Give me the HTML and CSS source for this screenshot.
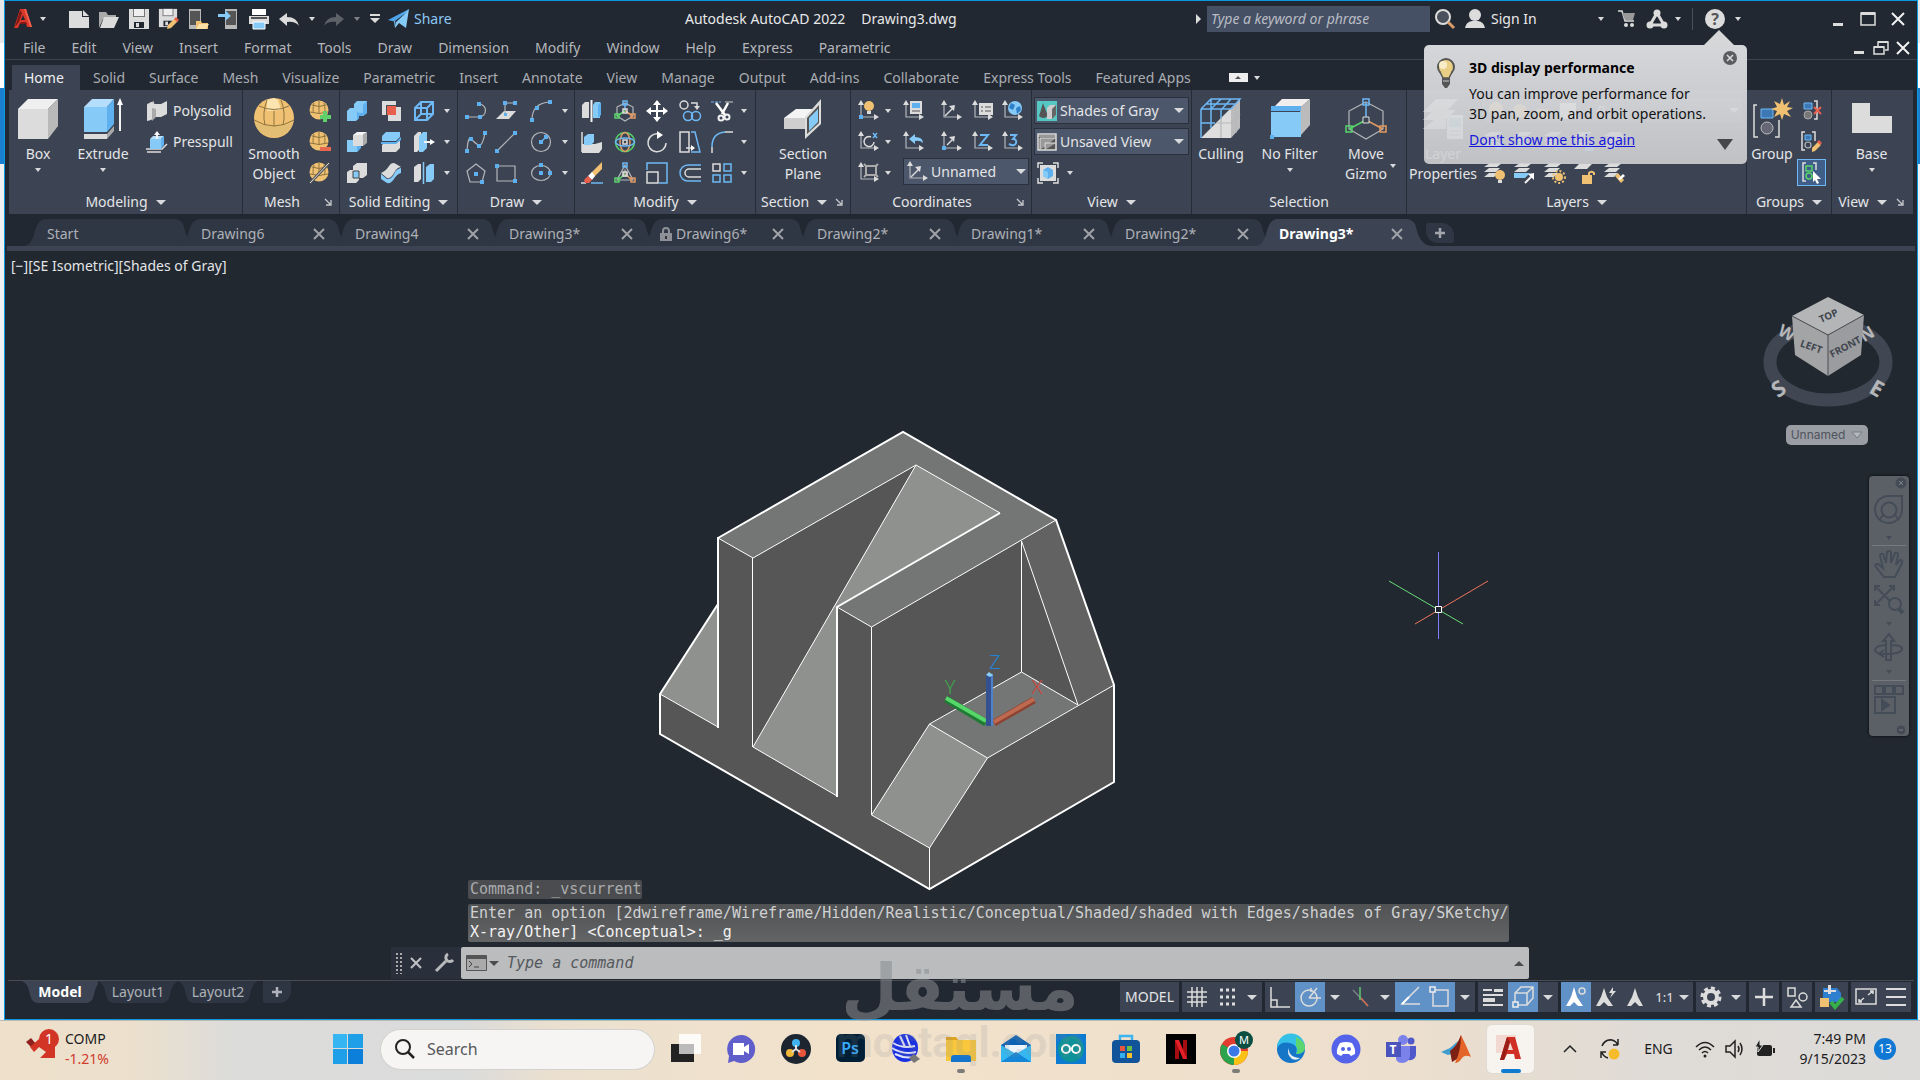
FILE: index.html
```html
<!DOCTYPE html>
<html lang="en">
<head>
<meta charset="utf-8">
<title>Autodesk AutoCAD 2022 - Drawing3.dwg</title>
<link rel="stylesheet" href="styles.css">
</head>
<body>
<svg class="defs" aria-hidden="true">
  <symbol id="axes" viewBox="0 0 22 22"><path class="lg" d="M4 4V17H18"/><path class="w" d="M4 0l3 5H1zM22 17l-5-3v6z"/></symbol>
  <symbol id="stack" viewBox="0 0 22 22"><path class="w" d="M7 1h12l-5 4H1zM6 6h11l-4 4H1zM6 11h9l-4 4H1z"/></symbol>
  <symbol id="ball" viewBox="0 0 22 22"><circle class="y" cx="10" cy="10" r="9.500"/><path class="ly" d="M1 12q9 3 18 0M5 3q-2 8 0 10M10 0v14M15 3q2 8 0 10M3 5q7 3 14 0"/></symbol>
  <symbol id="x" viewBox="0 0 12 12"><path d="M1 1l10 10M11 1L1 11" fill="none" stroke="currentColor" stroke-width="2"/></symbol>
  <symbol id="plus" viewBox="0 0 12 12"><path d="M6 1v10M1 6h10" fill="none" stroke="currentColor" stroke-width="2.500"/></symbol>
  <symbol id="launch" viewBox="0 0 8 8"><path d="M1 1l5 5M7 2v5H2" fill="none" stroke="#c8cacd" stroke-width="1.300"/></symbol>
  <symbol id="phone" viewBox="0 0 22 22"><path fill="#b8b8b8" d="M4 1h12v20H4z"/><path fill="#555" d="M5 3h10v14H5z"/></symbol>
  <symbol id="floppy" viewBox="0 0 22 22"><path class="w" d="M1 1h20v20H1z"/><path fill="#777" d="M5 1h12v8H5z"/><path fill="#eee" d="M6 1h10v7H6z"/><path fill="#222831" d="M6 14h10v6H6z"/><path class="w" d="M8 15h3v4H8z"/></symbol>
</svg>

<main class="app">
  <header class="titlebar">
    <div class="quick">
      <button class="logo" aria-label="Application menu"><svg width="20" height="22" viewBox="0 0 20 22"><path fill="#d8372a" d="M7 1h6l6 18h-5l-1-4H7l-2 5H1z"/><path fill="#222831" d="M10 7l2 5H8z"/><path fill="#7f1a16" d="M7 2l2 3-3 9-4 5zM8 14h5l1 2H7z"/><path fill="#f0624d" d="M11 1h2l6 18h-2z"/></svg><i class="arr"></i></button>
      <button aria-label="New"><svg width="22" height="22"><path class="w" d="M1 3h13v6h7v11H1z"/><path class="w" d="M15 2l6 6h-6z"/></svg></button>
      <button aria-label="Open"><svg width="22" height="22"><path fill="#aaa" d="M1 4h7l2 3h8v4H5L1 20z"/><path class="w" d="M6 9h15l-5 11H2z"/></svg></button>
      <button aria-label="Save"><svg width="22" height="22"><use href="#floppy"/></svg></button>
      <button aria-label="Save as"><svg width="22" height="22"><use href="#floppy" width="20" height="20"/><path fill="#222831" d="M8 21l12-12 3 3v10z"/><path class="y" d="M10 17l7-7 3 3-7 7-4 1z"/><path class="r" d="M18 9l3 3-2 2-3-3z"/></svg></button>
      <button aria-label="Open from mobile"><svg width="22" height="22"><use href="#phone" x="-3"/><path class="y" d="M8 13h5l1 2h6v6H8z"/><path fill="#fbe0a8" d="M11 16h10l-3 5H8z"/></svg></button>
      <button aria-label="Save to mobile"><svg width="22" height="22"><use href="#phone" x="3"/><path class="b" d="M0 6h7V2l6 6-6 5V9H0z"/></svg></button>
      <button aria-label="Plot"><svg width="22" height="22"><path fill="#fff" d="M4 1h14v6H4z"/><path class="w" d="M1 8h20v8H1z"/><path fill="#555" d="M3 9h16v2H3z"/><path class="b" stroke="#fff" d="M5 14h12v7H5z"/></svg></button>
      <button aria-label="Undo"><svg width="22" height="22"><path class="w" d="M1 11l8-6v4q10 0 12 9-4-5-12-4v4z"/></svg></button>
      <button class="slim" aria-label="Undo list"><i class="arr"></i></button>
      <button aria-label="Redo"><svg width="22" height="22"><path fill="#5c6067" d="M21 11l-8-6v4Q3 9 1 18q4-5 12-4v4z"/></svg></button>
      <button class="slim" aria-label="Redo list"><i class="arr dim"></i></button>
      <button class="slim wide" aria-label="Customize"><svg width="12" height="12"><path class="w" d="M1 1h10v2H1zM1 5h10l-5 5z"/></svg></button>
      <button class="share"><svg width="22" height="22"><path class="b" d="M21 1l-3 19-7-5-4 5-1-7z"/><path fill="#4fa3e8" d="M21 1L8 14l-8-2z"/><path fill="#222831" d="M19 4L8 14v4l-1-5z"/></svg>Share</button>
    </div>
    <h1><span>Autodesk AutoCAD 2022</span><span>Drawing3.dwg</span></h1>
    <div class="account">
      <i class="play"></i>
      <input class="keyword" type="text" aria-label="Keyword" placeholder="Type a keyword or phrase">
      <button aria-label="Search"><svg width="22" height="22"><circle cx="9" cy="9" r="7" fill="#4a515d" stroke="#ddd" stroke-width="2"/><path d="M14 14l6 6" stroke="#d99a6a" stroke-width="3"/></svg></button>
      <button class="signin"><svg width="22" height="22"><circle class="w" cx="11" cy="7" r="6"/><path class="w" d="M1 20q1-6 7-7h6q6 1 7 7z"/></svg><span>Sign In</span><i class="arr"></i></button>
      <button class="cart" aria-label="App store"><svg width="20" height="20"><path d="M1 2h4l3 10h9" class="ls"/><path fill="#999" d="M5 4h13l-2 7H8z"/><circle class="w" cx="9" cy="16" r="2"/><circle class="w" cx="15" cy="16" r="2"/></svg></button>
      <button class="apps" aria-label="Autodesk apps"><svg width="22" height="20"><path fill="none" stroke="#d8d8d8" stroke-width="3" d="M11 4L4 16h14z"/><circle class="w" cx="11" cy="4" r="3.500"/><circle class="w" cx="4" cy="16" r="3.500"/><circle class="w" cx="18" cy="16" r="3.500"/></svg></button>
      <button class="slim" aria-label="More apps"><i class="arr"></i></button>
      <i class="rule"></i>
      <button class="help" aria-label="Help"><svg width="22" height="22"><circle class="w" cx="11" cy="11" r="10"/><text x="11" y="17" text-anchor="middle" font-size="16" font-weight="700" fill="#555">?</text></svg></button>
      <button class="slim" aria-label="Help menu"><i class="arr"></i></button>
      <div class="winctl">
        <button aria-label="Minimize"><svg width="14" height="16"><path class="w" d="M2 12h10v3H2z"/></svg></button>
        <button aria-label="Maximize"><svg width="16" height="16"><path fill="none" stroke="#ddd" stroke-width="1.500" d="M1 2h14v12H1z"/><path class="w" d="M1 1h14v3H1z"/></svg></button>
        <button aria-label="Close"><svg width="14" height="14"><path class="lw" d="M1 1l12 12M13 1L1 13"/></svg></button>
      </div>
    </div>
  </header>

  <nav class="menubar">
    <button>File</button><button>Edit</button><button>View</button><button>Insert</button><button>Format</button><button>Tools</button><button>Draw</button><button>Dimension</button><button>Modify</button><button>Window</button><button>Help</button><button>Express</button><button>Parametric</button>
    <div class="docctl">
      <button aria-label="Minimize drawing"><svg width="14" height="14"><path class="w" d="M2 10h10v3H2z"/></svg></button>
      <button aria-label="Restore drawing"><svg width="16" height="14"><path fill="none" stroke="#ddd" stroke-width="1.500" d="M1 6h10v7H1zM5 5V1h10v8h-3"/><path class="w" d="M1 5h10v2H1zM5 0h10v2H5z"/></svg></button>
      <button aria-label="Close drawing"><svg width="14" height="14"><path class="lw" d="M1 1l12 12M13 1L1 13"/></svg></button>
    </div>
  </nav>

  <nav class="rtabs">
    <button class="on">Home</button><button>Solid</button><button>Surface</button><button>Mesh</button><button>Visualize</button><button>Parametric</button><button>Insert</button><button>Annotate</button><button>View</button><button>Manage</button><button>Output</button><button>Add-ins</button><button>Collaborate</button><button>Express Tools</button><button>Featured Apps</button>
    <button class="fold" aria-label="Minimize ribbon"><svg width="19" height="9"><path fill="#eee" d="M0 0h19v9H0z"/><path fill="#555" d="M9 3l3 3H6z"/></svg><i class="arr"></i></button>
  </nav>

  <section class="ribbon">
    <div class="panel p-modeling">
      <div class="body">
        <button class="big w58"><svg width="42" height="42"><path fill="#efefef" d="M1 11L11 1h30L31 11z"/><path class="w" d="M1 11h30v30H1z"/><path fill="#b9b9b9" d="M31 11L41 1v27L31 41z"/></svg>Box<i class="arr"></i></button>
        <button class="big w72"><svg width="42" height="42"><path fill="#b4defb" d="M2 9l8-8h22l-7 8z"/><path class="b" d="M2 9h23v25H2z"/><path class="d" d="M25 9l7-8v25l-7 8z"/><path class="w" d="M2 36h23v5H2z"/><path fill="#aaa" d="M25 36l7-8v5l-7 8z"/><path class="lw" d="M38 33V5"/><path fill="#fff" d="M38 0l3 7h-6z"/></svg>Extrude<i class="arr"></i></button>
        <div class="stack">
          <button class="row"><svg width="22" height="22"><path fill="#bbb" d="M1 4l7-3v14l-7 6z"/><path class="w" d="M1 5l4-3 4 2h6l6-3v13l-6 3H9l-4 3-4 1z"/><path fill="#aaa" d="M6 8l4 1v8l-4 4z"/></svg>Polysolid</button>
          <button class="row"><svg width="22" height="22"><path class="ls" d="M0 18h16l5-5M1 21h14"/><path class="b" d="M4 8h11v10H4z"/><path fill="#b4defb" d="M4 8l3-3h11l-3 3z"/><path class="d" d="M15 8l3-3v9l-3 4z"/><path class="lw" d="M11 8V2"/><path fill="#fff" d="M11 0l3 4H8z"/></svg>Presspull</button>
        </div>
      </div>
      <h2>Modeling<i class="arr lg5"></i></h2>
    </div>

    <div class="panel p-mesh">
      <div class="body">
        <button class="big w62"><svg width="42" height="42"><circle class="y" cx="21" cy="20" r="20"/><path fill="#d9ba76" d="M2 25q9 4 19 3 10 1 19-3A20 20 0 0 1 2 25z" opacity=".6"/><path fill="#fbe4b0" d="M14 2l7-2 4 2 3 10-14 1z"/><path class="ly" d="M1 22q10 6 20 6t20-6M14 2q-5 13-2 25M28 2q5 13 2 25M6 8q15 7 30 0M21 13v15"/></svg>Smooth<br>Object</button>
        <div class="grid c1">
          <button aria-label="Smooth more"><svg width="22" height="22"><use href="#ball"/><path fill="#5fd06a" d="M14 11h4v4h4v4h-4v3h-4v-3h-3v-4h3z"/></svg></button>
          <button aria-label="Smooth less"><svg width="22" height="22"><use href="#ball"/><path fill="#e8684f" d="M11 16h11v4H11z"/></svg></button>
          <button aria-label="Refine mesh"><svg width="22" height="22"><use href="#ball"/><path d="M1 21L20 1" stroke="#555" stroke-width="3"/><path d="M1 21L20 1" stroke="#ddd"/></svg></button>
        </div>
      </div>
      <div class="foot"><h2>Mesh</h2><button aria-label="Mesh settings"><svg width="8" height="8"><use href="#launch"/></svg></button></div>
    </div>

    <div class="panel p-solid">
      <div class="body grid">
        <button aria-label="Union"><svg width="22" height="22"><path class="b" d="M1 11l3-3h4V4l3-3h10v12l-4 3h-4v2l-3 3H1z"/><path class="d" d="M13 16h4l4-3V1l-4 4v8h-4zM11 11v9l2-2v-5z"/></svg></button>
        <button aria-label="Extract"><svg width="22" height="22"><path class="w" d="M2 1h14v6h5v14H8v-6H2z"/><path fill="#4b4f58" d="M6 5h10v10H6z"/><path class="r" d="M7 6h9v9H7z"/></svg></button>
        <button aria-label="Extract edges"><svg width="22" height="22"><path class="lb2" d="M2 8l6-6h12v12l-6 6H2zM2 8h12v12M14 8l6-6M8 3v11h11M8 14l-6 6"/></svg></button>
        <button class="a" aria-label="More edge tools"><i class="arr"></i></button>
        <button aria-label="Subtract"><svg width="22" height="22"><path class="b" d="M1 9h12v10l-2 2H1z"/><path class="d" d="M11 11h4v6l-4 4z"/><path class="w" d="M7 4h10v11H7z"/><path fill="#f4f4f4" d="M7 4l4-3h10l-4 3z"/><path fill="#aaa" d="M17 4l4-3v11l-4 3z"/></svg></button>
        <button aria-label="Slice"><svg width="22" height="22"><path class="b" d="M2 5l4-4h14v5l-4 4H2z"/><path class="w" d="M2 14l3-3h12l3-2v8l-4 4H2z"/><path class="d" d="M1 11h15l5-5v3l-5 4H1z"/></svg></button>
        <button aria-label="Extrude faces"><svg width="22" height="22"><path class="w" d="M1 5l4-4h3v16l-4 4H1z"/><path class="b" d="M6 5l4-4h4v16l-4 4H6z"/><path class="lw" d="M11 11h7"/><path fill="#fff" d="M22 11l-5-3v6z"/></svg></button>
        <button class="a" aria-label="More face tools"><i class="arr"></i></button>
        <button aria-label="Intersect"><svg width="22" height="22"><path class="w" d="M1 10l3-2h3V4l4-3h10v12l-4 3h-4v2l-3 3H1z"/><path class="b" stroke="#444" d="M7 9h6v7H7z"/></svg></button>
        <button aria-label="Thicken"><svg width="22" height="22"><path class="w" d="M1 11Q6 9 9 4t7-2l5 3q-4 0-7 6t-7 5z"/><path class="b" d="M1 12l6 5q5 0 7-5t7-6v5q-4 1-7 6t-7 4l-6-4z"/></svg></button>
        <button aria-label="Separate"><svg width="22" height="22"><path class="w" d="M1 5l4-3h3v15l-3 3H1z"/><path class="b" d="M13 5l4-3h4v15l-3 3h-5z"/><path stroke="#86caf8" stroke-width="1.500" d="M10.500 0v22"/></svg></button>
        <button class="a" aria-label="More body tools"><i class="arr"></i></button>
      </div>
      <h2>Solid Editing<i class="arr lg5"></i></h2>
    </div>

    <div class="panel p-draw">
      <div class="body grid">
        <button aria-label="Polyline"><svg width="22" height="22"><path class="lg" d="M2 17h12a6 6 0 0 0 0-13"/><path class="d" d="M0 15h4v4H0zM12 2h4v4h-4zM13 15h4v4h-4z"/></svg></button>
        <button aria-label="Planar surface"><svg width="22" height="22"><path class="w" d="M1 19l8-8h12l-7 8z"/><path class="lg" d="M10 15V3h10"/><path class="d" d="M8 1h4v4H8zM18 1h4v4h-4zM9 13h3v3H9z"/></svg></button>
        <button aria-label="Arc"><svg width="22" height="22"><path class="lg" d="M2 20Q2 3 20 2"/><path class="d" d="M0 18h4v4H0zM18 0h4v4h-4zM5 6h4v4H5z"/></svg></button>
        <button class="a" aria-label="Arc options"><i class="arr"></i></button>
        <button aria-label="Spline"><svg width="22" height="22"><path class="lg" d="M2 20Q3 5 6 8t7 6 7-12"/><path class="d" d="M0 18h4v4H0zM4 6h4v4H4zM12 13h4v4h-4zM18 0h4v4h-4z"/></svg></button>
        <button aria-label="Line"><svg width="22" height="22"><path class="lg" d="M2 20L20 2"/><path class="d" d="M0 18h4v4H0zM18 0h4v4h-4z"/></svg></button>
        <button aria-label="Circle"><svg width="22" height="22"><circle class="lg" cx="11" cy="11" r="9.500"/><path class="lb" d="M11 11l5-5"/><path class="d" d="M9 9h4v4H9zM14 4h4v4h-4z"/></svg></button>
        <button class="a" aria-label="Circle options"><i class="arr"></i></button>
        <button aria-label="Polygon"><svg width="22" height="22"><path class="lg" d="M11 2l9 7-3 11H5L2 9z"/><path class="d" d="M9 10h4v4H9zM15 18h4v4h-4z"/></svg></button>
        <button aria-label="Rectangle"><svg width="22" height="22"><path class="lg" d="M2 4h18v15H2z"/><path class="d" d="M0 2h4v4H0zM18 17h4v4h-4z"/></svg></button>
        <button aria-label="Ellipse"><svg width="22" height="22"><ellipse class="lg" cx="11" cy="11" rx="9.500" ry="7.500"/><path class="d" d="M9 9h4v4H9zM18 9h4v4h-4zM9 1h4v4H9z"/></svg></button>
        <button class="a" aria-label="Ellipse options"><i class="arr"></i></button>
      </div>
      <h2>Draw<i class="arr lg5"></i></h2>
    </div>

    <div class="panel p-modify">
      <div class="body grid">
        <button aria-label="3D mirror"><svg width="22" height="22"><path class="w" d="M1 5l3-3h4v16H1z"/><path class="b" d="M12 5l2-3h5v16h-7z"/><path class="d" d="M17 5l3-3v13l-3 3z"/><path class="lw" d="M10.500 0v22"/></svg></button>
        <button aria-label="3D move"><svg width="22" height="22"><path class="lg" d="M11 3l8 4v9l-8 5-8-5V7z"/><path class="lb" d="M11 3v8M9 1h4v4H9z"/><path class="lr" d="M11 11l8 5M17 14h4v4h-4z"/><path class="le" d="M11 11l-8 5M1 14h4v4H1z"/><path class="ls" d="M9 9h4v4H9z"/></svg></button>
        <button aria-label="Move"><svg width="22" height="22"><path fill="#fff" d="M11 0l4 5h-3v5h5V7l5 4-5 4v-3h-5v5h3l-4 5-4-5h3v-5H5v3l-5-4 5-4v3h5V5H7z"/></svg></button>
        <button aria-label="Copy"><svg width="22" height="22"><circle class="ls" cx="5" cy="5" r="4"/><path class="ls" d="M12 3h6v4"/><path class="w" d="M18 10l3-4h-6z"/><circle class="lb" cx="9" cy="16" r="4.500"/><circle class="lb" cx="17" cy="16" r="4.500"/></svg></button>
        <button aria-label="Trim"><svg width="22" height="22"><path stroke="#6db8f5" stroke-dasharray="3 1" d="M0 2h10"/><path class="lg" d="M14 2h8"/><path fill="none" stroke="#fff" stroke-width="2.500" d="M5 3l9 12M17 3l-6 11"/><circle class="lw" cx="10" cy="18" r="2.500"/><circle class="lw" cx="16" cy="17" r="2.500"/></svg></button>
        <button class="a" aria-label="Trim options"><i class="arr"></i></button>
        <button aria-label="3D align"><svg width="22" height="22"><path class="ls" d="M1 1v20"/><path class="w" d="M1 13h13l7-2v7l-3 4H1z"/><path class="b" d="M3 6l4-3h6v8l-3 3H3z"/></svg></button>
        <button aria-label="3D rotate"><svg width="22" height="22"><circle class="le" cx="11" cy="11" r="9.500"/><ellipse class="lr" cx="11" cy="11" rx="5" ry="9.500"/><ellipse class="lb" cx="11" cy="11" rx="9.500" ry="4"/><path class="ls" d="M9 9h4v4H9z"/></svg></button>
        <button aria-label="Rotate"><svg width="22" height="22"><path class="ls" d="M13 3A9 9 0 1 0 20 12"/><path fill="#fff" d="M17 4l-6-4v8z"/></svg></button>
        <button aria-label="Stretch"><svg width="22" height="22"><path class="ls" d="M1 1h9v20H1zM7 17h6"/><path class="lb" d="M12 1h4l5 20h-9"/><path fill="#fff" d="M16 17l-4-3v6z"/></svg></button>
        <button aria-label="Fillet"><svg width="22" height="22"><path class="lb" d="M1 16Q1 2 14 1"/><path class="ls" d="M1 16v6M14 1h8"/></svg></button>
        <button class="a" aria-label="Fillet options"><i class="arr"></i></button>
        <button aria-label="Erase"><svg width="22" height="22"><path class="ls" d="M0 21h5"/><path class="lb" d="M10 21h12"/><path class="y" d="M10 11L21 0v7l-8 8z"/><path fill="#fff" d="M7 14l4-4 3 4-3 4z"/><path class="r" d="M3 18l4-4 4 4-3 3H4z"/></svg></button>
        <button aria-label="3D scale"><svg width="22" height="22"><path class="lg" d="M11 3l8 15H3z"/><path fill="#8a8d92" d="M11 6l4 9H7z"/><path class="lb" d="M9 1h4v4H9z"/><path class="lr" d="M11 12l7 6M17 16h4v4h-4z"/><path class="le" d="M11 12l-7 6M1 16h4v4H1z"/><path class="ls" d="M9 10h4v4H9z"/></svg></button>
        <button aria-label="Scale"><svg width="22" height="22"><path class="lb" d="M1 8V1h20v20h-8"/><path class="ls" d="M1 10h11v11H1z"/></svg></button>
        <button aria-label="Offset"><svg width="22" height="22"><path class="lb" d="M22 3H9a8 8 0 0 0 0 16h13"/><path class="ls" d="M22 7H10a4 4 0 0 0 0 8h12"/></svg></button>
        <button aria-label="Array"><svg width="22" height="22"><path class="ls" d="M2 2h7v7H2z"/><path class="lb" d="M13 2h7v7h-7zM2 13h7v7H2zM13 13h7v7h-7z"/></svg></button>
        <button class="a" aria-label="Array options"><i class="arr"></i></button>
      </div>
      <h2>Modify<i class="arr lg5"></i></h2>
    </div>

    <div class="panel p-section">
      <div class="body">
        <button class="big fill"><svg width="42" height="42"><path fill="#f4f4f4" d="M2 20L14 11h22l-9 9z"/><path fill="#cfcfcf" d="M2 20h22v11H2z"/><path class="w" d="M23 19L39 1v25L23 41z"/><path fill="#555" d="M25 20L37 7v18L25 36z"/><path class="b" d="M27 20l9-9v13l-9 9z"/></svg>Section<br>Plane</button>
      </div>
      <div class="foot"><h2>Section<i class="arr lg5"></i></h2><button aria-label="Section settings"><svg width="8" height="8"><use href="#launch"/></svg></button></div>
    </div>

    <div class="panel p-coord">
      <div class="body grid">
        <button aria-label="UCS icon"><svg width="22" height="22"><use href="#axes"/><circle class="y" cx="12" cy="6" r="5"/><path class="w" d="M10 11h4v3h-4z"/><path class="d" d="M2 15h4v4H2z"/></svg></button>
        <button class="a" aria-label="UCS icon options"><i class="arr"></i></button>
        <button aria-label="UCS"><svg width="22" height="22"><use href="#axes"/><path class="w" d="M8 1h12v13H8z"/><path class="d" d="M10 3h8v5h-8z"/><path stroke="#555" d="M10 11h8"/></svg></button>
        <button aria-label="World"><svg width="22" height="22"><use href="#axes"/><path class="ls" d="M5 16l8-8"/><path class="w" d="M15 5l-1 6-5-5z"/></svg></button>
        <button aria-label="Named UCS"><svg width="22" height="22"><use href="#axes"/><path class="w" d="M8 3h14v12H8z"/><path stroke="#555" d="M10 7h2M14 7h6M10 11h2M14 11h6"/></svg></button>
        <button aria-label="UCS world"><svg width="22" height="22"><use href="#axes"/><circle class="b" cx="14" cy="8" r="7"/><path fill="#2f80c8" d="M10 3l4 2-2 5-4-2zM15 8l4-2 1 4-4 4z"/></svg></button>
        <button aria-label="X"><svg width="22" height="22"><use href="#axes"/><path class="ls" d="M14 6a5 5 0 1 0 3 5"/><path class="lb" d="M16 2l4 5M20 2l-4 5"/></svg></button>
        <button class="a" aria-label="Rotate axis"><i class="arr"></i></button>
        <button aria-label="UCS previous"><svg width="22" height="22"><use href="#axes"/><path class="b" d="M7 8l6-5v3q8 0 8 6-3-3-8-2v3z"/></svg></button>
        <button aria-label="Origin"><svg width="22" height="22"><use href="#axes"/><path class="ls" d="M7 14l5-5"/><path class="w" d="M15 5l-1 6-5-5z"/><path class="d" d="M2 15h4v4H2z"/></svg></button>
        <button aria-label="Z axis vector"><svg width="22" height="22"><use href="#axes"/><path class="lb2" d="M9 4h8l-8 10h8"/></svg></button>
        <button aria-label="3 point"><svg width="22" height="22"><use href="#axes"/><path class="lb2" d="M9 4h6l-3 4q4 0 3 4t-7 1"/></svg></button>
        <button aria-label="Face"><svg width="22" height="22"><use href="#axes"/><path fill="none" stroke="#aaa" stroke-width="2" d="M9 4h10v9H9zM7 2l3 3M21 2l-3 3M7 15l3-3M21 15l-3-3"/></svg></button>
        <button class="a" aria-label="Face options"><i class="arr"></i></button>
        <label class="combo ucs"><svg width="22" height="22"><use href="#axes"/><path class="ls" d="M5 16l8-8"/><path class="w" d="M15 5l-1 6-5-5z"/></svg><select aria-label="UCS name"><option>Unnamed</option></select><i class="arr lg5"></i></label>
      </div>
      <div class="foot"><h2>Coordinates</h2><button aria-label="Coordinate settings"><svg width="8" height="8"><use href="#launch"/></svg></button></div>
    </div>

    <div class="panel p-view">
      <div class="body stack">
        <label class="combo"><svg width="20" height="20"><path fill="#56c8c4" d="M0 0h20v20H0z"/><path fill="#555" d="M6 2l5 13q-5 4-9 0z"/><path fill="#ccc" d="M10 7l3-3h6v10l-4 4h-5z"/><path fill="#666" d="M15 8l4-4v10l-4 4z"/></svg><select aria-label="Visual style"><option>Shades of Gray</option></select><i class="arr lg5"></i></label>
        <label class="combo"><svg width="20" height="20"><path fill="#555" stroke="#ddd" stroke-width="1.500" d="M1 2h18v16H1z"/><path stroke="#ddd" fill="#999" d="M1 4h18M3 18V6h16M8 18v-7h11"/></svg><select aria-label="View"><option>Unsaved View</option></select><i class="arr lg5"></i></label>
        <div class="vp"><button aria-label="Viewport configuration"><svg width="22" height="22"><path class="w" d="M3 3h16v16H3z"/><path class="ls" d="M1 6V1h5M16 1h5v5M21 16v5h-5M6 21H1v-5"/><path class="d" d="M11 5l5 3v6l-5 3-5-3V8z"/><path class="b" d="M6 8l5 2v7l-5-3z"/></svg></button><i class="arr"></i></div>
      </div>
      <h2>View<i class="arr lg5"></i></h2>
    </div>

    <div class="panel p-select">
      <div class="body">
        <button class="big w60"><svg width="42" height="42"><path fill="#ddd" d="M1 40L15 26 31 10v30z"/><path fill="#bbb" d="M31 10l9-9v29l-9 10z"/><path class="lb" d="M1 11h30M1 11v29M1 11L11 1h29L31 11M11 11v19M21 11v10M1 25h14M6 6h30M21 1L12 10M31 1l-9 10M11 1v10"/><path class="lg" d="M21 20v20M16 25h15l9-9M36 6v29" stroke="#666"/></svg>Culling</button>
        <button class="big w80"><svg width="42" height="42"><path fill="#f2eeee" d="M4 10l9-9h28L31 10z"/><path fill="#bbb" d="M31 10L41 1v26l-9 10z"/><path class="d" d="M2 8h30v5H2z"/><path class="b" d="M2 14h30v25H2z"/><path class="d" d="M1 37h4v4H1z"/></svg>No Filter<i class="arr"></i></button>
        <button class="big w74"><svg width="42" height="42"><path class="lg" d="M21 4l17 9v18l-17 10L4 31V13z"/><path class="lb" d="M21 4v18M18 1h6v6h-6z"/><path class="le" d="M21 22L4 31M1 28h6v6H1z"/><path class="lr" d="M21 22l17 9M35 28h6v6h-6z"/><path fill="#3c4453" stroke="#ddd" d="M18 19h6v6h-6z"/></svg>Move<span>Gizmo<i class="arr up"></i></span></button>
      </div>
      <h2>Selection</h2>
    </div>

    <div class="panel p-layers">
      <div class="body">
        <button class="big w72"><svg width="42" height="42"><path class="w" d="M14 1h22L24 14H1zM12 12h22L23 22H1zM12 22h12v9H1z"/><path fill="#eee" d="M25 17h16v24H25z"/><path fill="#7fc8d8" d="M27 20h12v9H27z"/><path stroke="#888" d="M28 33h10M28 37h10"/></svg>Layer<br>Properties</button>
        <div class="lay">
          <label class="combo"><svg width="110" height="20"><circle class="y" cx="12" cy="8" r="7"/><circle class="y" cx="36" cy="10" r="7"/><path class="y" d="M52 8h12v10H52z"/><path fill="#fff" d="M76 2h16v16H76z"/></svg><select aria-label="Layer"><option>0</option></select><i class="arr lg5"></i></label>
          <div class="grid lrow">
            <button aria-label="Off"><svg width="22" height="22"><use href="#stack"/><circle class="d" cx="16" cy="15" r="4"/></svg></button>
            <button aria-label="Isolate"><svg width="22" height="22"><use href="#stack"/><path class="b" d="M6 11h12l-4 4H1z"/></svg></button>
            <button aria-label="Freeze"><svg width="22" height="22"><use href="#stack"/><path class="lb" d="M12 11l8 8M20 11l-8 8"/></svg></button>
            <button aria-label="Lock"><svg width="22" height="22"><use href="#stack"/><path class="d" d="M12 13h9v7h-9z"/></svg></button>
            <button aria-label="Make current"><svg width="22" height="22"><use href="#stack"/><circle class="w" cx="16" cy="6" r="4"/></svg></button>
            <button aria-label="Turn all layers on"><svg width="22" height="22"><use href="#stack"/><circle class="y" cx="17" cy="13" r="5"/><path class="w" d="M15 18h4v3h-4z"/></svg></button>
            <button aria-label="Unisolate"><svg width="22" height="22"><use href="#stack"/><path class="b" d="M1 11h16l-5 5H1z"/><path class="lw" d="M12 21l7-7"/><path fill="#fff" d="M21 11v7l-6-6z"/></svg></button>
            <button aria-label="Thaw all"><svg width="22" height="22"><use href="#stack"/><circle class="y" cx="16" cy="15" r="4"/><circle cx="16" cy="15" r="6" fill="none" stroke="#f0c172" stroke-width="2" stroke-dasharray="2 2"/></svg></button>
            <button aria-label="Unlock"><svg width="22" height="22"><path class="w" d="M6 2h13l-5 5H1z"/><path class="y" d="M9 13h10v9H9z"/><path fill="none" stroke="#f0c172" stroke-width="2" d="M16 13v-2a3 3 0 0 1 5 0v2"/></svg></button>
            <button aria-label="Match layer"><svg width="22" height="22"><use href="#stack"/><path class="y" d="M12 14l3-3 6 7-3 3z"/><path fill="#fff" d="M15 17l5-5 2 2-5 4z"/></svg></button>
          </div>
        </div>
      </div>
      <h2>Layers<i class="arr lg5"></i></h2>
    </div>

    <div class="panel p-groups">
      <div class="body">
        <button class="big w48"><svg width="42" height="42"><path class="ls" d="M6 7H3v32h4M24 39h4V22"/><path fill="#3d78b4" stroke="#6db8f5" d="M10 11h12v9H10z"/><circle cx="16" cy="30" r="6" fill="#667" stroke="#bbb"/><path class="y" d="M31 0l2 7 6-4-3 6 6 1-6 3 4 6-7-3-2 6-2-6-6 3 3-6-6-2 6-2-3-6 6 3z"/></svg>Group</button>
        <div class="grid c1">
          <button aria-label="Ungroup"><svg width="22" height="22"><path fill="#3d78b4" stroke="#6db8f5" d="M3 3h8v6H3z"/><circle cx="7" cy="15" r="4" fill="#777" stroke="#aaa"/><path class="ls" d="M13 1h3v18h-3"/><path d="M13 7l7 7M20 7l-7 7" stroke="#e8604c" stroke-width="2"/></svg></button>
          <button aria-label="Group edit"><svg width="22" height="22"><path class="ls" d="M4 1H1v18h3M11 1h3v9"/><path fill="#3d78b4" stroke="#6db8f5" d="M4 4h6v5H4z"/><circle class="lg" cx="7" cy="14" r="3"/><path class="y" d="M11 17l6-6 3 3-6 6-3 1z"/><path class="r" d="M18 9l3 3-2 2-3-3z"/></svg></button>
          <button class="hot" aria-label="Group selection"><svg width="22" height="22"><path class="ls" d="M5 1H2v18h3M12 1h3v7"/><path class="le" d="M5 4h6v5H5z"/><circle class="le" cx="8" cy="14" r="3"/><path fill="#fff" d="M12 9l8 8h-4l2 4-2 1-2-4-2 2z"/></svg></button>
        </div>
      </div>
      <h2>Groups<i class="arr lg5"></i></h2>
    </div>

    <div class="panel p-base">
      <div class="body">
        <button class="big fill"><svg width="42" height="42"><path class="w" d="M1 5h18v13h22v17H1z"/></svg>Base<i class="arr"></i></button>
      </div>
      <div class="foot"><h2>View<i class="arr lg5"></i></h2><button aria-label="View settings"><svg width="8" height="8"><use href="#launch"/></svg></button></div>
    </div>
  </section>

  <nav class="doctabs">
    <div class="tab"><a href="#start">Start</a></div>
    <div class="tab"><a href="#d6">Drawing6</a><button aria-label="Close tab"><svg width="12" height="12"><use href="#x"/></svg></button></div>
    <div class="tab"><a href="#d4">Drawing4</a><button aria-label="Close tab"><svg width="12" height="12"><use href="#x"/></svg></button></div>
    <div class="tab"><a href="#d3">Drawing3*</a><button aria-label="Close tab"><svg width="12" height="12"><use href="#x"/></svg></button></div>
    <div class="tab locked"><a href="#d6b"><svg width="12" height="14"><path fill="#8d9096" d="M0 6h12v8H0z"/><path fill="none" stroke="#8d9096" stroke-width="2" d="M3 6V4a3 3 0 0 1 6 0v2"/><path fill="#333" d="M5 9h2v3H5z"/></svg>Drawing6*</a><button aria-label="Close tab"><svg width="12" height="12"><use href="#x"/></svg></button></div>
    <div class="tab"><a href="#d2">Drawing2*</a><button aria-label="Close tab"><svg width="12" height="12"><use href="#x"/></svg></button></div>
    <div class="tab"><a href="#d1">Drawing1*</a><button aria-label="Close tab"><svg width="12" height="12"><use href="#x"/></svg></button></div>
    <div class="tab"><a href="#d2b">Drawing2*</a><button aria-label="Close tab"><svg width="12" height="12"><use href="#x"/></svg></button></div>
    <div class="tab on"><a href="#d3b">Drawing3*</a><button aria-label="Close tab"><svg width="12" height="12"><use href="#x"/></svg></button></div>
    <button class="newtab" aria-label="New drawing"><svg width="12" height="12"><use href="#plus"/></svg></button>
  </nav>

  <section class="canvas">
    <p class="vlabel">[−][SE Isometric][Shades of Gray]</p>

    <svg class="model" width="500" height="480" viewBox="0 0 500 480">
      <path fill="#565656" d="M78 118L263 12l153 88 58 165v97L289.500 469 20 314v-40l58-90z"/>
      <path fill="#737674" d="M78 118L263 12l153 88-184.500 107L197 187l163-94-84-48-163 93z"/>
      <path fill="#8f918f" d="M276 45l84 48-163 94v189l-84-49zM78 184l-58 90 58 33zM289.500 304l58 34-58 90-58-33z"/>
      <path fill="#626262" d="M416 100l58 165-36 20-56.500-164z"/>
      <path fill="#737674" d="M381.500 252l56.500 33-90.500 53-58-34z"/>
      <g fill="none" stroke="#fff">
        <path d="M78 118l35 20L276 45l84 48M276 45L113 327l84 49M112.500 138v189M20 274l58 33M197 187l34.500 20L416 100M231.500 207v188l58 33V469M231.500 395l58-91 92-52 56.500 33-56.500-164v131M289.500 304l58 34 126.500-73M347.500 338l-58 90"/>
        <path stroke-width="2" d="M78 118L263 12l153 88 58 165v97L289.500 469 20 314v-40l58-90M78 117v191M360 93l-163 94v190"/>
      </g>
      <path stroke="#1f7a34" stroke-width="7" d="M306 279l40 24"/><path stroke="#57d769" stroke-width="4" d="M306 278l40 23"/>
      <path stroke="#8e4332" stroke-width="7" d="M394 280l-40 23"/><path stroke="#bd6a50" stroke-width="4" d="M394 279l-40 23"/>
      <path fill="#34508f" d="M346 254h7v52h-7z"/><path fill="#4f82c9" d="M351 254h2v52h-2z"/><path fill="#8ccdf6" d="M346 255l3-3 4 3-3 2z"/>
      <g font-size="20" font-weight="300" text-anchor="middle"><text x="355" y="249" fill="#1f83d6">Z</text><text x="310" y="274" fill="#3aa94c">Y</text><text x="397" y="274" fill="#d0453c">X</text></g>
    </svg>

    <svg class="cross" width="140" height="110"><path stroke="#8080ff" d="M68.500 12v87"/><path stroke="#66dd77" d="M19 41l74 43"/><path stroke="#f0745c" d="M45 84l73-43"/><path fill="#222831" stroke="#fff" d="M65.500 66.500h6v6h-6z"/></svg>

    <svg class="cube" width="140" height="120" viewBox="20 10 140 120">
      <ellipse cx="88" cy="82" rx="58" ry="38" fill="none" stroke="#404652" stroke-width="13"/>
      <g fill="#b5b6b8" font-weight="700" font-size="17" text-anchor="middle"><text transform="translate(44 58) rotate(28)">W</text><text transform="translate(130 59) rotate(-30)">N</text><text transform="translate(43 115) rotate(-35)" font-size="22">S</text><text transform="translate(133 115) rotate(30)" font-size="22">E</text></g>
      <path fill="#b4b5b7" d="M88 17l36 18-36 20-36-19z"/><path fill="#a3a4a6" d="M52 36l36 19v41L55 75z"/><path fill="#9b9c9f" d="M124 35L88 55v41l33-21z"/>
      <path fill="none" stroke="#4a4c50" d="M52 36l36 19 36-20M88 55v41"/>
      <g fill="#41464f" font-weight="700" font-size="10" text-anchor="middle"><text transform="translate(90 39) rotate(-24)">TOP</text><text transform="translate(70 70) rotate(20)">LEFT</text><text transform="translate(107 70) rotate(-28)">FRONT</text></g>
    </svg>
    <button class="ucsname">Unnamed<svg width="12" height="8"><path fill="#b4b8bf" stroke="#777c85" d="M1 1h10L6 7z"/></svg></button>

    <div class="navbar">
      <button class="mini" aria-label="Close"><svg width="10" height="10"><circle cx="5" cy="5" r="5" fill="#444b55"/><path stroke="#7a8087" d="M3 3l4 4M7 3L3 7"/></svg></button>
      <button class="n40" aria-label="Steering wheel"><svg width="30" height="30"><path d="M15 1h13v14A13.500 13.500 0 1 1 15 1z"/><circle cx="15" cy="15" r="7.500"/><path d="M9 20l-4 5M21 20l4 5"/></svg></button>
      <button class="n14" aria-label="Wheel menu"><i class="arr"></i></button>
      <hr>
      <button class="n36" aria-label="Pan"><svg width="30" height="30"><path d="M10 27L2 17q-2-3 2-3l5 4L6 6q0-3 3-2l3 9 1-11q2-2 4 0v11l4-10q3-1 3 2l-2 10 4-5q3 0 2 3l-7 14z"/></svg></button>
      <button class="n32" aria-label="Zoom"><svg width="30" height="30"><path d="M1 1l20 20M20 1L1 20M1 6V1h5M15 1h5v5M1 15v5h5"/><circle cx="21" cy="19" r="6" fill="#5b6066"/><path stroke-width="4" d="M25 24l4 4"/></svg></button>
      <button class="n18" aria-label="Zoom menu"><i class="arr"></i></button>
      <button class="n32" aria-label="Orbit"><svg width="30" height="30"><path d="M12 27V8H9l6-7 5 7h-3v19zM12 12q-11 1-11 5t10 4M17 12q11 0 11 4t-13 5l-8 0M10 17l-5 4 5 3"/></svg></button>
      <button class="n18" aria-label="Orbit menu"><i class="arr"></i></button>
      <hr>
      <button class="n36" aria-label="ShowMotion"><svg width="30" height="30"><path d="M1 1h8v8H1zM11 1h8v8h-8zM21 1h8v8h-8zM1 12h20v16H1z"/><path fill="#444c58" d="M8 15l7 5-7 5z"/></svg></button>
      <button class="mini last" aria-label="Customize"><svg width="10" height="10"><circle cx="5" cy="5" r="4" fill="#444b55"/><path stroke="#7a8087" d="M3 5h4"/></svg></button>
    </div>

    <div class="cmd">
      <p class="hist old">Command: _vscurrent</p>
      <p class="hist">Enter an option [2dwireframe/Wireframe/Hidden/Realistic/Conceptual/Shaded/shaded with Edges/shades of Gray/SKetchy/<br><b>X-ray/Other] &lt;Conceptual&gt;: _g</b></p>
      <div class="line">
        <div class="grip">
          <svg width="6" height="22"><path stroke="#aaa" stroke-width="2" stroke-dasharray="2 2" d="M1 1v21M5 1v21"/></svg>
          <button aria-label="Close command line"><svg width="12" height="12"><use href="#x"/></svg></button>
          <button aria-label="Customize"><svg width="20" height="20"><path stroke="#b8babd" stroke-width="3" d="M2 18L12 8"/><path fill="none" stroke="#b8babd" stroke-width="3" d="M14 1a4 4 0 1 0 5 6"/></svg></button>
        </div>
        <label class="entry"><svg width="21" height="16"><path fill="#aaa" stroke="#555" d="M.5.5h20v15H.5z"/><path fill="#555" d="M1 1h19v3H1z"/><path fill="none" stroke="#444" d="M3 6l3 3-3 3M8 12h5"/></svg><i class="arr dark"></i><input type="text" aria-label="Command" placeholder="Type a command"><i class="arr dark flip"></i></label>
      </div>
    </div>
  </section>

  <footer class="status">
    <div class="layouts"><button class="on">Model</button><button>Layout1</button><button>Layout2</button><button class="add" aria-label="New layout"><svg width="12" height="12"><use href="#plus"/></svg></button></div>
    <div class="tools">
      <div class="g"><button class="model-b">MODEL</button></div>
      <div class="g"><button aria-label="Grid"><svg width="22" height="22"><path class="ls" d="M6 1v20M11 1v20M16 1v20M1 6h20M1 11h20M1 16h20"/></svg></button><button aria-label="Snap"><svg width="22" height="22"><path stroke="#ddd" stroke-width="3" stroke-dasharray="3 3" d="M4 4h16M4 11h16M4 18h16"/></svg></button><button class="s" aria-label="Snap options"><i class="arr lg5"></i></button></div>
      <div class="g"><button aria-label="Ortho"><svg width="22" height="22"><path class="ls" d="M2 1v20h19M2 14h6v7"/></svg></button><button class="hl" aria-label="Polar"><svg width="22" height="22"><circle class="ls" cx="10" cy="12" r="8"/><path class="ls" d="M10 12l8-10M10 12h12M12 2v4"/></svg></button><button class="s" aria-label="Polar options"><i class="arr lg5"></i></button><button aria-label="Isodraft"><svg width="22" height="22"><path stroke="#7b7f86" stroke-width="1.500" d="M4 4l15 16"/><path stroke="#5fc66d" stroke-width="1.500" d="M11 1v13"/><path stroke="#d06b52" stroke-width="1.500" d="M12 12l7 8"/></svg></button><button class="s" aria-label="Isodraft options"><i class="arr lg5"></i></button><button class="hl" aria-label="Object tracking"><svg width="22" height="22"><path class="ls" d="M20 1L3 18h18"/><path stroke="#fff" d="M3 18l7-7" stroke-width="2"/></svg></button><button class="hl" aria-label="Object snap"><svg width="22" height="22"><path class="ls" d="M4 4h15v16H4z"/><path fill="#6092c8" stroke="#eee" stroke-width="1.500" d="M1 1h5v5H1z"/></svg></button><button class="s" aria-label="Snap settings"><i class="arr lg5"></i></button></div>
      <div class="g"><button aria-label="Lineweight"><svg width="22" height="22"><path class="w" d="M1 3h9v2H1zM12 3h9v3h-9zM1 8h20v2H1zM1 12h12v4H1zM1 18h20v2H1z"/></svg></button><button class="hl" aria-label="3D object snap"><svg width="22" height="22"><path class="ls" d="M3 7l6-6h12v11l-6 7H3zM3 7h12v12M15 7l6-6"/><path fill="#6092c8" stroke="#eee" stroke-width="1.500" d="M1 16h5v5H1z"/></svg></button><button class="s" aria-label="3D snap options"><i class="arr lg5"></i></button></div>
      <div class="g"><button class="hl" aria-label="Annotation visibility"><svg width="22" height="22"><path fill="#fff" d="M9 1l3 10 6 9h-5l-4-4-4 4H1l5-9z"/><circle class="ls" cx="17" cy="5" r="3"/></svg></button><button aria-label="AutoScale"><svg width="22" height="22"><path class="w" d="M9 2l3 9 6 9h-5l-4-4-4 4H1l5-9zM18 1l-4 6h3l-2 5 6-7h-3z"/></svg></button><button aria-label="Annotation"><svg width="22" height="22"><path class="w" d="M10 2l3 9 5 9h-4l-4-4-4 4H2l5-9z"/></svg></button><button class="scale">1:1<i class="arr lg5"></i></button></div>
      <div class="g"><button aria-label="Workspace"><svg width="22" height="22"><circle cx="11" cy="11" r="6" fill="none" stroke="#ddd" stroke-width="4"/><circle cx="11" cy="11" r="9" fill="none" stroke="#ddd" stroke-width="3" stroke-dasharray="4 3"/></svg></button><button class="s" aria-label="Workspace options"><i class="arr lg5"></i></button></div>
      <div class="g"><button aria-label="Annotation monitor"><svg width="22" height="22"><path fill="none" stroke="#ddd" stroke-width="2.500" d="M11 2v18M2 11h18"/></svg></button></div>
      <div class="g"><button aria-label="Isolate objects"><svg width="22" height="22"><path class="ls" d="M2 2h7v8H2zM10 14l5 7H5z"/><circle class="ls" cx="17" cy="11" r="4"/></svg></button></div>
      <div class="g"><button class="perf" aria-label="Graphics performance"><svg width="26" height="26"><path fill="#2f7fd0" d="M4 4h14l4 5v9H4z"/><path class="w" d="M9 1h3v9H9zM5 6h12v2H5z"/><path class="y" d="M1 14h9v9H1z"/><path fill="none" stroke="#35b04a" stroke-width="4" d="M12 18l4 5 8-9"/></svg></button></div>
      <div class="g"><button aria-label="Clean screen"><svg width="22" height="22"><path class="ls" d="M1 3h20v15H1zM13 9l5-4M9 12l-5 4M15 5h3v3M4 13v3h3"/></svg></button><button aria-label="Customization"><svg width="22" height="22"><path stroke="#ddd" stroke-width="2" d="M1 3h20M1 11h20M1 19h20"/></svg></button></div>
    </div>
  </footer>

  <aside class="balloon">
    <svg class="bulb" width="20" height="32"><circle cx="10" cy="10" r="8" fill="#e9cf85" stroke="#555" stroke-width="2"/><path fill="#e9cf85" stroke="#555" stroke-width="1.500" d="M4 15l3 6h6l3-6"/><circle cx="7" cy="8" r="4" fill="#f8edc8"/><path fill="#555" d="M6 21h8v6l-3 4H9l-3-4z"/><path stroke="#ccc" d="M7 24h6"/></svg>
    <div class="msg"><strong>3D display performance</strong><p>You can improve performance for<br>3D pan, zoom, and orbit operations.</p><a href="#hide">Don't show me this again</a></div>
    <div class="bctl"><button aria-label="Close"><svg width="14" height="14"><circle cx="7" cy="7" r="7" fill="#5a5c60"/><path stroke="#ddd" stroke-width="1.500" d="M4 4l6 6M10 4l-6 6"/></svg></button><button aria-label="Expand"><svg width="16" height="11"><path fill="#45474b" d="M0 0h16L8 11z"/></svg></button></div>
  </aside>
</main>

<footer class="taskbar">
  <button class="widget"><svg width="34" height="30"><path fill="#8e2120" d="M0 13l5-4 5 6-4 4z"/><path fill="#d23425" d="M4 18l9-8 8 6-5-7h13v20H14l6-6-7-5-5 5z"/><circle cx="23" cy="10" r="10" fill="#d23425"/><text x="23" y="15" text-anchor="middle" font-size="14" fill="#fff">1</text></svg><span>COMP<br><em>-1.21%</em></span></button>
  <button class="start" aria-label="Start"><svg width="30" height="30"><path fill="#35b6f3" d="M0 0h14v14H0z"/><path fill="#1e9fe8" d="M15 0h15v14H15zM0 15h14v15H0z"/><path fill="#0c7fdb" d="M15 15h15v15H15z"/></svg></button>
  <label class="search"><svg width="20" height="20"><circle cx="8" cy="8" r="7" fill="none" stroke="#222" stroke-width="2"/><path stroke="#222" stroke-width="2.500" d="M13 13l6 6"/></svg><input type="text" placeholder="Search" aria-label="Search"></label>
  <div class="pins">
    <button aria-label="Task view"><svg width="30" height="30"><path fill="#222" d="M0 10h23v18H0z"/><path fill="#fff" d="M8 0h22v20H8z" opacity=".85"/><path fill="#bbb" d="M8 10h15v10H8z"/></svg></button>
    <button aria-label="Chat"><svg width="30" height="30"><path fill="#605ecb" d="M15 1a14 14 0 1 1-7 26l-6 2 1-7A14 14 0 0 1 15 1z"/><path fill="#fff" d="M7 9h11v4l5-3v10l-5-3v4H7z"/></svg></button>
    <button aria-label="Resolve"><svg width="30" height="30"><circle cx="15" cy="15" r="15" fill="#1d2530"/><circle cx="15" cy="9" r="4" fill="#3fb4ee"/><circle cx="9" cy="19" r="4" fill="#f0b93a"/><circle cx="21" cy="19" r="4" fill="#e8553a"/><path stroke="#ddd" stroke-width="2" d="M15 15v-4M15 15l-4 3M15 15l4 3"/></svg></button>
    <button aria-label="Photoshop"><svg width="30" height="30"><rect width="29" height="28" rx="5" fill="#001e36"/><text x="14" y="20" text-anchor="middle" font-size="16" font-weight="600" fill="#31a8ff">Ps</text></svg></button>
    <button aria-label="Thread"><svg width="30" height="30"><ellipse cx="14" cy="14" rx="13" ry="14" fill="#1a2fe0"/><path fill="none" stroke="#dfe4ff" stroke-width="2" d="M2 9q10 6 22 3M1 14q11 7 24 4M4 20q10 5 20 3M9 2l5 11M15 1l4 11"/><path fill="#777" d="M18 24l5-4 6 5-6 4z"/></svg></button>
    <button class="run" aria-label="File Explorer"><svg width="30" height="30"><path fill="#e0a320" d="M0 3h10l3 4H0z"/><path fill="#f9c73c" d="M0 6h30v21H0z"/><path fill="#1475cf" d="M5 28v-4q0-3 3-3h14q3 0 3 3v4z"/></svg></button>
    <button aria-label="Mail"><svg width="30" height="30"><path fill="#0f63b5" d="M0 11L15 1l15 10v17H0z"/><path fill="#eef6fc" d="M4 11h22v8H4z"/><path fill="#35b8f1" d="M0 11l15 9 15-9v17H0z"/><path fill="#1487d8" d="M0 28l15-10 15 10z"/></svg></button>
    <button aria-label="Arduino"><svg width="30" height="30"><path fill="#0c7bd0" d="M0 0h30v30H0z"/><circle cx="15" cy="15" r="13" fill="#0c9298"/><circle cx="10" cy="15" r="4" fill="none" stroke="#fff" stroke-width="2"/><circle cx="20" cy="15" r="4" fill="none" stroke="#fff" stroke-width="2"/></svg></button>
    <button aria-label="Store"><svg width="30" height="30"><path fill="none" stroke="#3cb4f0" stroke-width="2.500" d="M9 7V2h12v5"/><rect y="6" x="1" width="28" height="23" rx="4" fill="#11549a"/><path fill="#e8573f" d="M9 12h5v5H9z"/><path fill="#6bbd45" d="M16 12h5v5h-5z"/><path fill="#35aef0" d="M9 19h5v5H9z"/><path fill="#fbc02d" d="M16 19h5v5h-5z"/></svg></button>
    <button aria-label="Netflix"><svg width="30" height="30"><path fill="#000" d="M0 0h30v30H0z"/><path fill="#a50c12" d="M9 6h4v19H9zM17 6h4v19h-4z"/><path fill="#e32028" d="M9 6h4l8 19h-4z"/></svg></button>
    <button class="run" aria-label="Chrome"><svg width="36" height="36" viewBox="0 -4 36 36"><circle cx="16" cy="16" r="14" fill="#e23c30"/><path fill="#2ba24c" d="M16 16L4 9a14 14 0 0 0 12 21z"/><path fill="#fbc116" d="M16 16h14a14 14 0 0 1-14 14z"/><circle cx="16" cy="16" r="7" fill="#fff"/><circle cx="16" cy="16" r="5.500" fill="#3b78e7"/><circle cx="26" cy="5" r="9" fill="#0b4f43"/><text x="26" y="9" text-anchor="middle" font-size="11" fill="#fff">M</text></svg></button>
    <button aria-label="Edge"><svg width="30" height="30"><circle cx="15" cy="15" r="14" fill="#1576c8"/><path fill="#35c0e8" d="M1 14A14 14 0 0 1 29 13q0 7-9 7 3-9-6-11T1 14z"/><path fill="#5dd56f" d="M20 3q9 4 9 11-1 6-9 6 3-4 0-8z"/><path fill="#e8eef2" d="M13 14q-1 9 11 10-3 3-8 1-6-5-3-11z"/></svg></button>
    <button aria-label="Discord"><svg width="30" height="30"><circle cx="15" cy="15" r="14.500" fill="#5562ea"/><path fill="#fff" d="M9 9q6-2 12 0 4 6 3 11l-4 2-2-2h-6l-2 2-4-2q-1-5 3-11z"/><circle cx="12" cy="15" r="2" fill="#5562ea"/><circle cx="18" cy="15" r="2" fill="#5562ea"/></svg></button>
    <button aria-label="Teams"><svg width="30" height="30"><circle cx="25" cy="7" r="3.500" fill="#5059c9"/><circle cx="17" cy="6" r="5" fill="#7b83eb"/><path fill="#5059c9" d="M20 12h10v9q-1 6-8 5z"/><path fill="#7b83eb" d="M10 12h14v10q-1 7-8 7t-6-7z"/><path fill="#4b53bc" d="M0 8h15v15H0z"/><text x="7" y="20" text-anchor="middle" font-size="12" font-weight="700" fill="#fff">T</text></svg></button>
    <button aria-label="Matlab"><svg width="30" height="30"><path fill="#3f9ed0" d="M0 18l9-4 8-7-6 13-4 1z"/><path fill="#7d1f12" d="M9 17q7-5 11-16l2 12-6 12-5 3z"/><path fill="#e4652a" d="M20 1q5 10 10 22-6-3-9 1-3 5-7 5 6-12 6-28z"/></svg></button>
    <button class="run act" aria-label="AutoCAD"><svg width="30" height="30"><path fill="#f2d8d0" d="M0 1h20v18H0z"/><path fill="#cf2f24" d="M11 3h8l6 22h-6l-1-5h-7l-3 6H4zM14 8l-2 8h5z"/><path fill="#9b1c16" d="M11 3l3 5-6 18H4z"/></svg></button>
  </div>
  <div class="tray">
    <button class="t40" aria-label="Hidden icons"><svg width="14" height="10"><path class="ld" d="M1 8l6-6 6 6"/></svg></button>
    <button class="t40" aria-label="Sync"><svg width="22" height="22"><path class="ld" d="M3 8q3-7 10-6 4 1 6 5V1M19 7h-5M2 20v-6h5M3 15q2 4 6 5"/><circle cx="15" cy="16" r="5.500" fill="#f5bb2b"/></svg></button>
    <button class="t56">ENG</button>
    <button class="net" aria-label="Network, volume and battery">
      <svg width="20" height="20"><path class="ld" d="M1 8q9-9 18 0M4 11q6-6 12 0M7 14q3-3 6 0"/><circle cx="10" cy="17" r="1.500" fill="#222"/></svg>
      <svg width="20" height="20"><path class="ld" d="M1 7h4l5-5v16l-5-5H1zM13 7q2 3 0 6M15 4q4 6 0 12"/></svg>
      <svg width="20" height="20"><rect x="2" y="6" width="15" height="11" rx="2" fill="#222"/><path fill="#222" d="M18 9h2v5h-2z"/><path fill="#222" stroke="#ddd" d="M4 1l-4 7h3v5l5-7H5V1z"/></svg>
    </button>
    <button class="clock">7:49 PM<br>9/15/2023</button>
    <span class="badge">13</span>
  </div>
</footer>

<div class="mark" aria-hidden="true"><b lang="ar" dir="rtl">مستقل</b><span>mostaql.com</span></div>
</body>
</html>
```
FILE: styles.css
```css
* { box-sizing: border-box; }
body {
  margin: 0; min-height: 100vh; display: flex; flex-direction: column; position: relative;
  font-family: "Noto Sans", "Open Sans", sans-serif; font-size: 14px; line-height: 20px; color: #e4e5e7;
  background: linear-gradient(#e6e7e9 0 43px, #fff 43px 88px, #1b7fd0 88px 164px, #eff0f2 164px);
}
h1, h2, p { margin: 0; font: inherit; }
button, input, select { font: inherit; color: inherit; background: none; border: 0; padding: 0; margin: 0; }
button { display: flex; align-items: center; justify-content: center; cursor: pointer; }
svg { flex: none; display: block; overflow: visible; }
.defs { position: absolute; width: 0; height: 0; }

.w { fill: #dcdcdc; } .b { fill: #86caf8; } .d { fill: #5fb0ee; } .y { fill: #f0c172; } .r { fill: #e8604c; }
.ls { fill: none; stroke: #dcdcdc; stroke-width: 1.5; }
.lg { fill: none; stroke: #b4b7bb; stroke-width: 1.2; }
.lw { fill: none; stroke: #f2f2f2; stroke-width: 2; }
.lb { fill: none; stroke: #6db8f5; stroke-width: 1.5; }
.lb2 { fill: none; stroke: #6db8f5; stroke-width: 2; }
.lr { fill: none; stroke: #e29a62; stroke-width: 1.5; }
.le { fill: none; stroke: #57d46a; stroke-width: 1.5; }
.ly { fill: none; stroke: #8d7440; stroke-width: 1; }
.ld { fill: none; stroke: #222; stroke-width: 1.5; }

.arr { display: block; flex: none; width: 0; height: 0; border: solid transparent; border-width: 4px 3px 0; border-top-color: #d8dadc; }
.arr.lg5 { border-width: 5px 5px 0; }
.arr.dim { border-top-color: #7d8188; }
.arr.dark { border-width: 5px 5px 0; border-top-color: #4a4c4f; }
.arr.flip { transform: rotate(180deg); }

.app { position: relative; flex: 1; display: flex; flex-direction: column; margin: 0 2px 0 4px; border: 1px solid #0a98e0; background: #222831; }

.titlebar { display: flex; align-items: center; height: 35px; color: #e8e9ea; }
.quick, .account { display: flex; align-items: center; }
.quick button { width: 30px; height: 30px; }
.quick .logo { width: 59px; justify-content: flex-start; gap: 7px; padding-left: 8px; }
.quick .slim, .account .slim { width: 15px; }
.quick .slim.wide { width: 22px; }
.quick .share { width: auto; gap: 4px; padding-left: 2px; color: #8bc8f5; }
.titlebar h1 { flex: 1; display: flex; justify-content: center; gap: 16px; white-space: nowrap; }
.account { width: 727px; }
.account button { width: 30px; height: 30px; }
.play { width: 0; border: solid transparent; border-width: 5px 0 5px 5px; border-left-color: #ddd; margin: 0 6px; }
.keyword { width: 223px; height: 26px; background: #465064; padding: 0 4px; font-style: italic; }
.keyword::placeholder { color: #b9bdc4; opacity: 1; }
.account .signin { width: 150px; gap: 5px; padding: 0 6px 0 4px; }
.signin span { flex: 1; text-align: left; }
.account .cart { width: 34px; } .account .apps { width: 26px; }
.rule { width: 1px; height: 22px; background: #4a515e; margin: 0 7px; }
.winctl { display: flex; margin-left: auto; padding-right: 4px; }

.menubar { display: flex; height: 24px; padding-left: 5px; color: #b4b7bc; border-bottom: 1px solid #3d434d; }
.menubar > button { padding: 0 13px; }
.docctl { display: flex; align-items: center; margin-left: auto; padding-right: 3px; }
.docctl button { width: 22px; }

.rtabs { display: flex; align-items: flex-end; height: 30px; padding-left: 7px; color: #a9adb3; }
.rtabs button { height: 25px; padding: 0 12px; }
.rtabs .on { background: #3c4453; color: #f0f0f0; margin-right: 1px; width: 68px; justify-content: flex-start; }
.rtabs .fold { gap: 6px; padding-left: 26px; }

.ribbon { display: flex; height: 124px; margin: 0 4px; background: #3c4453; }
.panel { flex: none; display: flex; flex-direction: column; padding-top: 5px; border-left: 1px solid #262c36; }
.panel:first-child { border-left: 0; }
.panel .body { height: 97px; display: flex; }
.panel h2 { flex: 1; display: flex; align-items: center; justify-content: center; gap: 8px; height: 20px; white-space: nowrap; }
.panel > h2 { flex: none; }
.foot { display: flex; }
.foot button { width: 18px; padding-right: 4px; }
.p-modeling { width: 233px; } .p-mesh { width: 97px; } .p-solid { width: 118px; } .p-draw { width: 117px; }
.p-modify { width: 181px; } .p-section { width: 95px; } .p-coord { width: 181px; } .p-view { width: 160px; }
.p-select { width: 215px; } .p-layers { width: 340px; } .p-groups { width: 85px; } .p-base { width: 80px; }

.big { flex-direction: column; justify-content: flex-start; padding-top: 3px; line-height: 20px; }
.big > svg { margin-bottom: 4px; }
.big > .arr { margin-top: 4px; }
.big span { position: relative; }
.arr.up { position: absolute; right: -9px; top: 0; }
.fill { flex: 1; } .w48 { width: 50px; } .w58 { width: 58px; } .w60 { width: 58px; } .w62 { width: 62px; }
.w72 { width: 72px; } .w74 { width: 74px; } .w80 { width: 79px; }
.stack { display: flex; flex-direction: column; }
.row { height: 31px; gap: 5px; justify-content: flex-start; padding-left: 7px; }
.panel .grid { display: grid; grid-auto-rows: 31px; justify-content: start; }
.panel .c1 { grid-template-columns: 29px; }
.p-solid .grid { grid-template-columns: 34px 34px 32px 14px; }
.p-draw .grid { grid-template-columns: 35px 26px 43px 6px; }
.p-modify .grid { grid-template-columns: 33px 34px 30px 36px 28px 16px; }
.p-coord .grid { grid-template-columns: 34px 6px 44px 32px 30px 30px; }
.panel .lrow { grid-template-columns: repeat(5, 30px); }
.hot { margin: 2px 0; background: #3f5f88; border: 1px solid #6db8f5; }

.combo { display: flex; align-items: center; height: 27px; margin: 2px 2px 2px 2px; padding: 0 4px 0 2px; background: #4c576b; border: 1px solid #2b313c; }
.combo select { flex: 1; min-width: 0; appearance: none; padding-left: 3px; }
.combo.ucs { grid-column: 3 / 7; margin: 1px -2px 3px 12px; padding-right: 2px; }
.vp { display: flex; align-items: center; height: 31px; padding-left: 5px; gap: 8px; }
.lay { flex: 1; }

.doctabs { display: flex; align-items: flex-end; height: 37px; margin: 0 2px; padding-left: 17px; border-bottom: 5px solid #3c4453; color: #aeb1b7; }
.tab { position: relative; z-index: 0; width: 154px; height: 27px; display: flex; align-items: center; padding: 3px 7px 0 23px; }
.tab::before {
  content: ""; position: absolute; z-index: -1; inset: 0 -24px 0 0; background: #303744;
  clip-path: path("M0 27Q8 26 11 12Q14 0 22 0H150Q158 0 160 8Q164 27 176 27Z");
}
.tab.on::before { background: #3c4453; }
.tab.on { color: #fff; font-weight: 700; }
.tab a { display: flex; align-items: center; gap: 4px; flex: 1; color: inherit; text-decoration: none; }
.tab.locked { padding-left: 20px; padding-right: 10px; }
.tab button { color: #9fa2a7; }
.newtab { width: 28px; height: 20px; margin: 0 0 3px 16px; background: #303744; border-radius: 2px 12px 2px 12px; color: #a2a5ab; }

.canvas { position: relative; flex: 1; min-height: 700px; background: #212830; overflow: hidden; }
.vlabel { position: absolute; left: 6px; top: 5px; color: #e4e5e7; }
.model { position: absolute; left: 635px; top: 169px; }
.cross { position: absolute; left: 1365px; top: 289px; }
.cube { position: absolute; right: 17px; top: 39px; }
.ucsname { position: absolute; right: 49px; top: 174px; width: 82px; height: 20px; gap: 6px; border-radius: 5px; background: #9a9da4; color: #50545c; font-size: 12px; font-family: Inter, sans-serif; }
.navbar { position: absolute; right: 8px; top: 225px; width: 40px; height: 260px; display: flex; flex-direction: column; background: #5b6066; border-radius: 4px; box-shadow: 0 0 2px 1px #14181d; }
.navbar svg { fill: none; stroke: #444c58; stroke-width: 2; }
.navbar .mini svg { stroke-width: 1; }
.navbar .arr { border-top-color: #444c58; }
.navbar hr { width: 34px; height: 1px; border: 0; margin: 0 auto; background: #737a80; }
.mini { height: 13px; justify-content: flex-end; padding-right: 3px; }
.mini.last { margin-top: auto; }
.n40 { height: 42px; } .n14 { height: 14px; } .n36 { height: 38px; } .n32 { height: 32px; } .n18 { height: 16px; }

.cmd { position: absolute; left: 386px; bottom: 1px; width: 1138px; display: flex; flex-direction: column; align-items: flex-start; gap: 5px; font-family: "DejaVu Sans Mono", monospace; font-size: 15px; line-height: 19px; }
.hist { margin-left: 77px; padding: 0 0 0 2px; background: linear-gradient(#505254, #636465); border-radius: 2px; color: #d0d1d2; white-space: nowrap; }
.hist.old { background: #4a4c4f; color: #a9abad; }
.hist b { font-weight: 400; color: #f2f2f2; }
.line { display: flex; align-self: stretch; height: 32px; }
.grip { display: flex; align-items: center; gap: 8px; width: 70px; padding-left: 5px; background: #2a303b; color: #c0c2c5; }
.grip button + button { margin-left: 4px; }
.entry { flex: 1; display: flex; align-items: center; gap: 2px; padding: 0 5px; background: #babcbe; border-radius: 2px; }
.entry input { flex: 1; padding-left: 6px; font-style: italic; }
.entry input::placeholder { color: #55585c; opacity: 1; }

.status { display: flex; justify-content: space-between; align-items: flex-start; height: 39px; margin: 0 3px; padding: 0 3px 0 14px; border-top: 1px solid #464b54; }
.layouts { display: flex; color: #aeb1b7; }
.layouts button { width: 80px; height: 22px; background: #2f3643; clip-path: path("M0 0H80Q74 2 72 14Q70 22 64 22H16Q10 22 8 14Q6 2 0 0Z"); }
.layouts .on { width: 76px; background: #3c4453; color: #fff; font-weight: 700; }
.layouts .add { width: 28px; margin-left: 5px; clip-path: none; border-radius: 0 2px 12px 2px; }
.tools { display: flex; gap: 3px; padding-top: 1px; }
.g { display: flex; background: #3c4453; }
.g button { width: 30px; height: 30px; }
.g .s { width: 20px; }
.g .model-b { width: 59px; }
.g .perf { width: 33px; }
.g .hl { background: #6092c8; }
.g .scale { width: 42px; gap: 5px; font-size: 13px; }

.balloon { position: absolute; right: 170px; top: 44px; width: 323px; height: 119px; display: flex; padding: 12px 8px 8px 12px; border-radius: 5px; color: #111; background: linear-gradient(rgba(224, 225, 227, .94), rgba(206, 207, 210, .9)); }
.balloon::before { content: ""; position: absolute; right: 13px; top: -15px; border: solid transparent; border-width: 0 15px 15px; border-bottom-color: #d6d7d9; }
.msg { flex: 1; padding-left: 13px; white-space: nowrap; }
.msg strong { display: block; color: #000; line-height: 22px; padding-bottom: 5px; }
.msg a { display: inline-block; margin-top: 6px; color: #1616dc; }
.bctl { display: flex; flex-direction: column; justify-content: space-between; align-items: center; padding: 0 0 4px; margin: -7px -4px 0 -10px; }
.bctl button { height: 16px; }
.bctl button + button { margin: 0 10px 0 0; }

.taskbar { display: flex; align-items: center; height: 60px; padding: 0 24px 3px 26px; color: #1c1c1e; border-top: 1px solid #b9bab8; background: linear-gradient(90deg, #eee0ca 0, #ece0cd 7%, #dcdcda 12%, #dadbdb 24%, #ebe0cf 29%, #f2e2cb 45%, #eddfcd 72%, #dfdbd6 86%, #dcdbd9 100%); }
.widget { width: 295px; gap: 5px; justify-content: flex-start; text-align: left; }
.widget svg { margin-top: -10px; }
.widget em { font-style: normal; color: #cf3a2c; }
.start { width: 54px; }
.search { display: flex; align-items: center; gap: 12px; width: 273px; height: 39px; padding: 0 14px; margin-left: 6px; background: #f6f5f3; border-radius: 20px; box-shadow: 0 0 0 1px #d3d2cf; }
.search input { flex: 1; min-width: 0; font-size: 16px; }
.search input::placeholder { color: #56585b; opacity: 1; }
.pins { display: flex; margin-left: 4px; }
.pins button { position: relative; width: 55px; height: 48px; }
.run::after { content: ""; position: absolute; bottom: 0; left: 24px; width: 8px; height: 4px; border-radius: 2px; background: #7e7c78; }
.act::before { content: ""; position: absolute; z-index: 0; inset: 0 4px; border-radius: 5px; background: #f7f4ef; box-shadow: 0 0 0 1px #dfdad2; }
.act svg { position: relative; }
.act::after { left: 18px; width: 20px; background: #1079d0; }
.tray { display: flex; align-items: center; margin-left: auto; }
.t40 { width: 40px; } .t56 { width: 57px; }
.net { gap: 10px; padding: 0 13px 0 8px; }
.clock { text-align: right; width: 78px; justify-content: flex-end; }
.badge { width: 22px; height: 22px; margin-left: 8px; border-radius: 50%; background: #0f78d4; color: #fff; font-size: 12px; line-height: 22px; text-align: center; }

.mark { position: absolute; left: 50%; bottom: 16px; width: 240px; margin-left: -120px; display: flex; flex-direction: column; align-items: center; color: #8a8d90; opacity: .55; pointer-events: none; }
.mark b { font: 700 65px/68px "DejaVu Sans", sans-serif; }
.mark span { font: 700 42px/42px Roboto, sans-serif; opacity: .3; }
```
